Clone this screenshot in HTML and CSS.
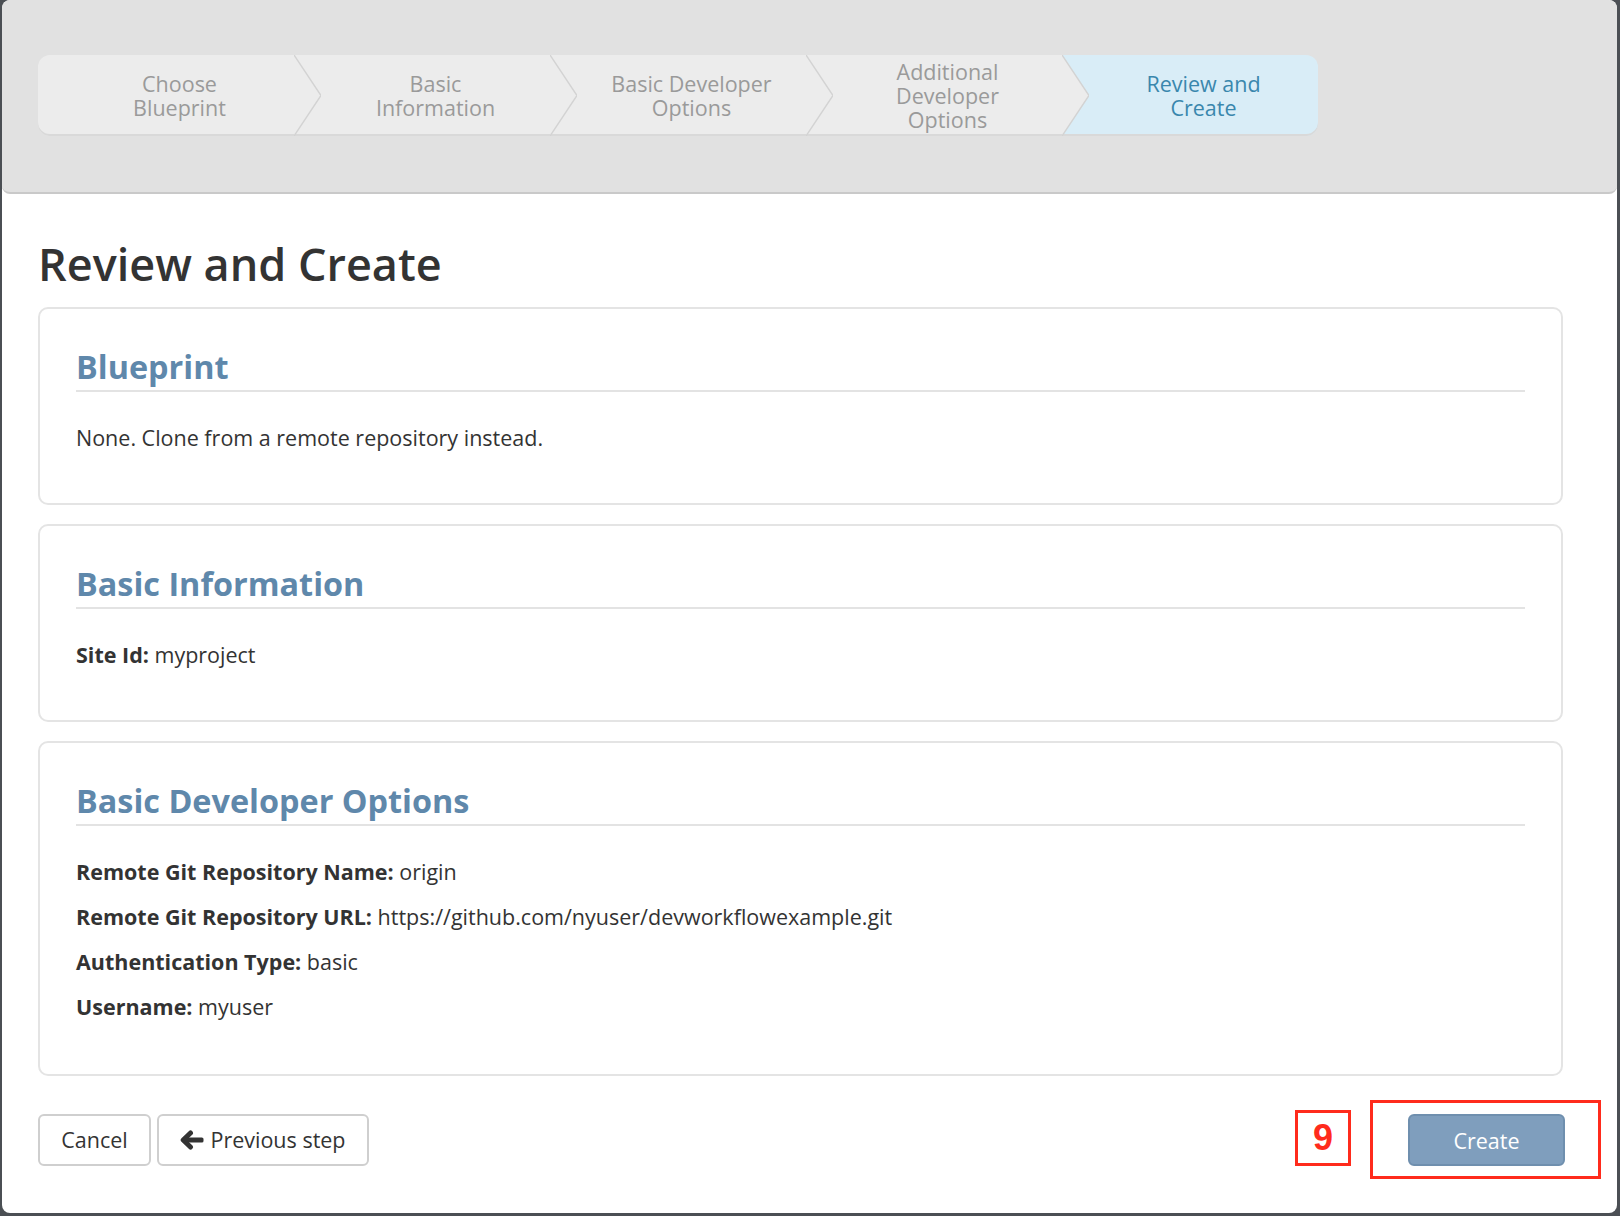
FILE: index.html
```html
<!DOCTYPE html>
<html lang="en">
<head>
<meta charset="utf-8">
<title>Review and Create</title>
<link rel="stylesheet" href="styles.css">
</head>
<body>
<div class="modal">
  <div class="wizard-header">
    <div class="steps">
      <div class="step">Choose<br>Blueprint
        <svg class="chev" viewBox="0 0 27 81" preserveAspectRatio="none"><polygon points="0,0 27,40.5 0,81" fill="#ececec"/><polyline points="0,0 27,40.5 0,81" fill="none" stroke="#d3d3d3" stroke-width="1.5"/></svg>
      </div>
      <div class="step">Basic<br>Information
        <svg class="chev" viewBox="0 0 27 81" preserveAspectRatio="none"><polygon points="0,0 27,40.5 0,81" fill="#ececec"/><polyline points="0,0 27,40.5 0,81" fill="none" stroke="#d3d3d3" stroke-width="1.5"/></svg>
      </div>
      <div class="step">Basic Developer<br>Options
        <svg class="chev" viewBox="0 0 27 81" preserveAspectRatio="none"><polygon points="0,0 27,40.5 0,81" fill="#ececec"/><polyline points="0,0 27,40.5 0,81" fill="none" stroke="#d3d3d3" stroke-width="1.5"/></svg>
      </div>
      <div class="step">Additional<br>Developer<br>Options
        <svg class="chev" viewBox="0 0 27 81" preserveAspectRatio="none"><polygon points="0,0 27,40.5 0,81" fill="#ececec"/><polyline points="0,0 27,40.5 0,81" fill="none" stroke="#d3d3d3" stroke-width="1.5"/></svg>
      </div>
      <div class="step active">Review and<br>Create</div>
    </div>
  </div>

  <div class="content">
    <h1 class="page-title">Review and Create</h1>

    <section class="panel">
      <h2 class="panel-title">Blueprint</h2>
      <p class="line">None. Clone from a remote repository instead.</p>
    </section>

    <section class="panel">
      <h2 class="panel-title">Basic Information</h2>
      <p class="line"><b>Site Id:</b> myproject</p>
    </section>

    <section class="panel panel-last">
      <h2 class="panel-title">Basic Developer Options</h2>
      <p class="line"><b>Remote Git Repository Name:</b> origin</p>
      <p class="line"><b>Remote Git Repository URL:</b> https://github.com/nyuser/devworkflowexample.git</p>
      <p class="line"><b>Authentication Type:</b> basic</p>
      <p class="line"><b>Username:</b> myuser</p>
    </section>

    <div class="footer">
      <div class="left-btns">
        <button class="btn btn-cancel">Cancel</button>
        <button class="btn btn-prev">
          <svg class="arrow" viewBox="0 0 24 20"><polyline points="10.5,3 3.2,10 10.5,17" fill="none" stroke="#333" stroke-width="5" stroke-linecap="round" stroke-linejoin="round"/><rect x="4" y="7.4" width="19.5" height="5.2" rx="1.6" fill="#333"/></svg>
          <span>Previous step</span>
        </button>
      </div>
      <div class="annot">
        <div class="num">9</div>
        <div class="hl">
          <button class="btn btn-primary">Create</button>
        </div>
      </div>
    </div>
  </div>
</div>
</body>
</html>
```

FILE: styles.css
```css
* { box-sizing: border-box; }
html, body { margin: 0; padding: 0; }
body {
  background: #4b4f54;
  width: 1620px;
  height: 1216px;
  overflow: hidden;
  font-family: "Open Sans", "Liberation Sans", sans-serif;
  color: #333;
}
.modal {
  margin-left: 2px;
  width: 1615px;
  height: 1213px;
  background: #fff;
  border-radius: 8px;
  overflow: hidden;
}
.wizard-header {
  background: #e1e1e1;
  border-radius: 8px;
  border-bottom: 2px solid #c9c9c9;
  padding: 55px 0 56px 36px;
}
.steps {
  display: flex;
  width: 1280px;
  height: 81px;
}
.step {
  position: relative;
  flex: 0 0 256px;
  display: flex;
  align-items: center;
  justify-content: center;
  text-align: center;
  padding-left: 27px;
  background: #ececec;
  color: #9a9a9a;
  font-size: 21.5px;
  line-height: 24px;
  box-shadow: inset 0 -2px 0 #d9d9d9;
}
.step:first-child { border-radius: 12px 0 0 12px; }
.step:last-child { border-radius: 0 12px 12px 0; }
.step.active { background: #d9edf7; color: #3a87ad; }
.chev {
  position: absolute;
  top: 0;
  left: 100%;
  width: 27px;
  height: 81px;
  z-index: 1;
}
.content { padding: 0 54px 0 36px; }
.page-title {
  font-size: 45px;
  font-weight: 600;
  line-height: 54px;
  margin: 43px 0 16px;
  color: #333;
}
.panel {
  border: 2px solid #e4e4e4;
  border-radius: 10px;
  padding: 36px 36px 43px;
  margin-bottom: 19px;
}
.panel-last { margin-bottom: 0; padding-bottom: 45px; }
.panel-title {
  font-size: 32.4px;
  font-weight: 700;
  color: #5f88ab;
  line-height: 42px;
  margin: 0 0 23px;
  padding-bottom: 3px;
  border-bottom: 2px solid #e3e3e3;
}
.line {
  margin: 0;
  font-size: 21.5px;
  line-height: 45px;
}
.line b { font-weight: 700; }
.footer {
  display: flex;
  align-items: center;
  justify-content: space-between;
  margin-top: 24px;
}
.left-btns { display: flex; gap: 6px; }
.btn {
  height: 52px;
  border: 2px solid #cfcfcf;
  border-radius: 6px;
  background: #fff;
  font-family: inherit;
  font-size: 21.5px;
  color: #333;
  padding: 0;
  display: flex;
  align-items: center;
  gap: 6px;
  white-space: nowrap;
}
.btn-cancel { width: 113px; justify-content: center; }
.btn-prev { width: 212px; justify-content: center; }
.arrow { width: 24px; height: 20px; flex: none; }
.annot {
  display: flex;
  align-items: center;
  gap: 19px;
  margin-right: -38px;
}
.num {
  width: 56px;
  height: 56px;
  margin-bottom: 4px;
  border: 3px solid #ff2b1c;
  color: #ff2b1c;
  font-family: "Liberation Sans", Arial, sans-serif;
  font-weight: 700;
  font-size: 36px;
  display: flex;
  align-items: center;
  justify-content: center;
}
.hl {
  border: 3px solid #ff2b1c;
  padding: 11px 33px 10px 35px;
}
.btn-primary {
  width: 157px;
  background: #7f9ebd;
  border-color: #6f8fae;
  color: #fff;
  justify-content: center;
}
```
